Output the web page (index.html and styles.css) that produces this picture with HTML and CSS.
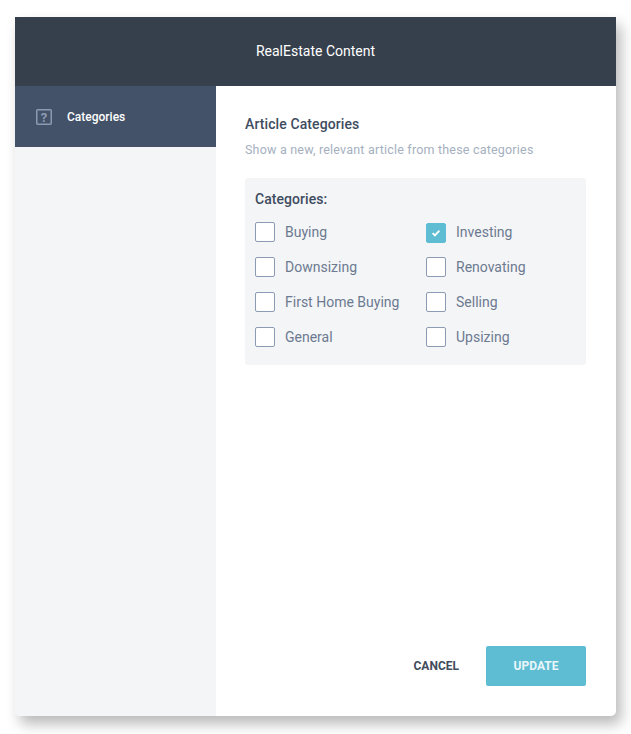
FILE: index.html
```html
<!DOCTYPE html>
<html lang="en">
<head>
<meta charset="utf-8">
<title>RealEstate Content</title>
<link rel="stylesheet" href="styles.css">
</head>
<body>
<div class="modal">
  <header class="modal-header">RealEstate Content</header>
  <div class="modal-body">
    <nav class="sidebar">
      <div class="nav-item">
        <svg class="nav-icon" width="16" height="16" viewBox="0 0 16 16" aria-hidden="true">
          <rect x="0.75" y="0.75" width="14.5" height="14.5" rx="1" fill="none" stroke="#8c9bb3" stroke-width="1.5"/>
          <text x="8" y="12.6" text-anchor="middle" class="nav-icon-glyph">?</text>
        </svg>
        <span>Categories</span>
      </div>
    </nav>
    <main class="content">
      <h2 class="title">Article Categories</h2>
      <p class="subtitle">Show a new, relevant article from these categories</p>
      <section class="panel">
        <h3 class="panel-title">Categories:</h3>
        <div class="options">
          <label class="option"><span class="box"></span>Buying</label>
          <label class="option"><span class="box checked"><svg width="10" height="8" viewBox="0 0 10 8" aria-hidden="true"><path d="M1.6 4.1 L3.9 6.3 L8.4 1.7" fill="none" stroke="#fff" stroke-width="1.9"/></svg></span>Investing</label>
          <label class="option"><span class="box"></span>Downsizing</label>
          <label class="option"><span class="box"></span>Renovating</label>
          <label class="option"><span class="box"></span>First Home Buying</label>
          <label class="option"><span class="box"></span>Selling</label>
          <label class="option"><span class="box"></span>General</label>
          <label class="option"><span class="box"></span>Upsizing</label>
        </div>
      </section>
      <footer class="actions">
        <button class="btn-cancel" type="button">CANCEL</button>
        <button class="btn-update" type="button">UPDATE</button>
      </footer>
    </main>
  </div>
</div>
</body>
</html>
```
FILE: styles.css
```css
* { box-sizing: border-box; }
html, body { margin: 0; height: 100%; background: #fff; overflow: hidden; }
body {
  padding: 17px 15px 18px;
  font-family: Roboto, "Liberation Sans", sans-serif;
}
.modal {
  height: 699px;
  width: 601px;
  display: flex;
  flex-direction: column;
  border-radius: 0 0 5px 5px;
  overflow: hidden;
  background: #fff;
  box-shadow: 5px 8px 14px rgba(0, 0, 0, 0.28);
}
.modal-header {
  height: 69px;
  background: #36404c;
  color: #fff;
  font-size: 14px;
  display: flex;
  align-items: center;
  justify-content: center;
  flex: none;
  padding-bottom: 1px;
}
.modal-body { flex: 1; display: flex; min-height: 0; }
.sidebar { width: 201px; flex: none; background: #f4f5f7; }
.nav-item {
  height: 61px;
  background: #435268;
  color: #fff;
  font-size: 12px;
  font-weight: 500;
  display: flex;
  align-items: center;
  gap: 15px;
  padding-left: 21px;
}
.nav-icon { flex: none; margin-top: 1px; }
.nav-icon-glyph { font: 700 13px Roboto, sans-serif; fill: #8c9bb3; }
.content {
  flex: 1;
  display: flex;
  flex-direction: column;
  padding: 29px 30px 30px 29px;
}
.title {
  margin: 0;
  font-size: 14px;
  line-height: 18px;
  font-weight: 500;
  color: #3e4c60;
  letter-spacing: 0.1px;
}
.subtitle {
  margin: 9px 0 0;
  font-size: 12.5px;
  line-height: 16px;
  color: #a5b0c0;
  letter-spacing: 0.2px;
}
.panel {
  margin-top: 20px;
  height: 187px;
  background: #f4f5f7;
  border-radius: 3px;
  padding: 12px 10px;
}
.panel-title {
  margin: 0;
  font-size: 14px;
  line-height: 18px;
  font-weight: 500;
  color: #3e4c60;
  letter-spacing: 0.05px;
}
.options {
  margin-top: 14px;
  display: grid;
  grid-template-columns: 171px 1fr;
  grid-auto-rows: 20px;
  row-gap: 15px;
}
.option {
  display: flex;
  align-items: center;
  gap: 10px;
  font-size: 14px;
  color: #6c7a90;
}
.box {
  width: 20px;
  height: 20px;
  flex: none;
  background: #fff;
  border: 1px solid #8c9bb3;
  border-radius: 2px;
  display: flex;
  align-items: center;
  justify-content: center;
}
.box.checked {
  background: #5fbdd3;
  border-color: #5fbdd3;
  position: relative;
  top: 1px;
}
.actions {
  margin-top: auto;
  display: flex;
  align-items: center;
  justify-content: flex-end;
  gap: 27px;
}
.btn-cancel, .btn-update {
  border: 0;
  padding: 0;
  font-family: inherit;
  font-size: 12px;
  font-weight: 700;
}
.btn-cancel { background: none; color: #414c5c; }
.btn-update {
  width: 100px;
  height: 40px;
  background: #5fbdd3;
  color: #e9f6f9;
  border-radius: 2px;
}
```
